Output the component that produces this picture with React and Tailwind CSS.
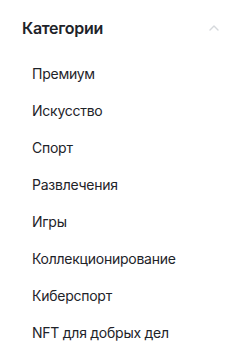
import React from 'react';

const CATEGORIES = [
  'Премиум',
  'Искусство',
  'Спорт',
  'Развлечения',
  'Игры',
  'Коллекционирование',
  'Киберспорт',
  'NFT для добрых дел',
];

const ChevronUp = () => (
  <svg width="10" height="6" viewBox="0 0 10 6" fill="none" className="text-[#d5d8dc]">
    <path d="M1 5l4-4 4 4" stroke="currentColor" strokeWidth="1.4" strokeLinecap="round" strokeLinejoin="round" />
  </svg>
);

const App = () => {
  return (
    <div className="w-[248px] h-[354px] bg-white font-['Inter','Noto_Sans',sans-serif] overflow-hidden">
      <div className="flex items-center justify-between h-[55px] pl-[22px] pr-[29px]">
        <span className="text-[16px] font-semibold text-[#1e2329] tracking-[-0.3px]">Категории</span>
        <ChevronUp />
      </div>
      <ul className="flex flex-col">
        {CATEGORIES.map((name) => (
          <li key={name} className="h-[37px] flex items-center pl-[32px] text-[14px] text-[#1e2329] tracking-[-0.25px]">
            {name}
          </li>
        ))}
      </ul>
    </div>
  );
};

export default App;
